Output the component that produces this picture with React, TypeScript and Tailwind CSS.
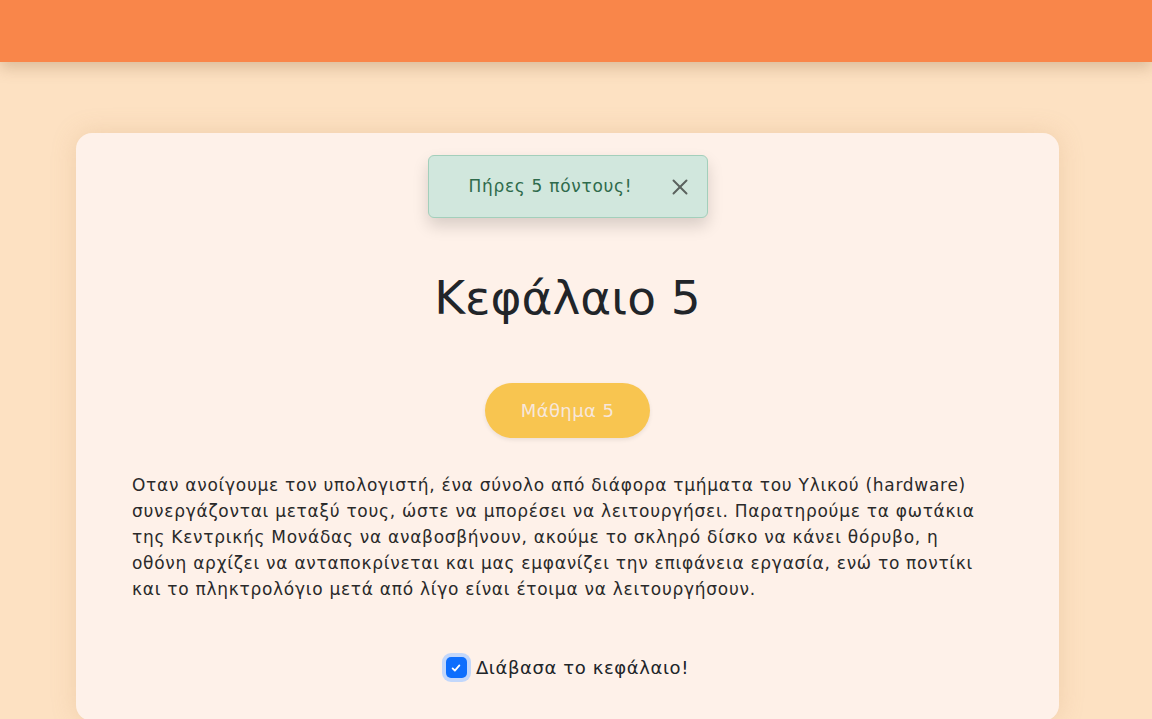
import { X } from "lucide-react";

export default function App() {
  return (
    <div
      className="min-h-screen bg-[#fde1c2] text-[#212529]"
      style={{ fontFamily: '"DejaVu Sans", sans-serif' }}
    >
      {/* Top bar */}
      <header className="relative z-10 h-[62px] bg-[#f9864a] shadow-[0_6px_14px_rgba(120,80,40,0.25)]" />

      <main className="flex pl-[76px] pr-[93px] pt-[71px]">
        <div className="flex-1 rounded-2xl bg-[#fef1e9] px-14 pt-[22px] pb-10 shadow-[0_0_24px_rgba(200,150,100,0.25)]">
          <div className="flex justify-center">
            <div className="flex h-[63px] w-[280px] items-center justify-between rounded-md border border-[#a3cfbb] bg-[#d1e7dd] pl-[40px] pr-[14px] text-[#2f6b4c] shadow-[0_8px_16px_rgba(0,0,0,0.15)]">
              <span className="text-[17px] tracking-[0.7px]">Πήρες 5 πόντους!</span>
              <X size={26} strokeWidth={1.8} className="text-[#5b625e]" />
            </div>
          </div>

          <h1 className="mt-[56px] text-center text-[47px] leading-none">
            Κεφάλαιο 5
          </h1>

          <div className="mt-[62px] flex justify-center">
            <button className="h-[55px] w-[165px] rounded-full bg-[#f8c550] text-[18px] tracking-[0.4px] text-[#f7e7dc] shadow-[0_2px_4px_rgba(0,0,0,0.08)]">
              Μάθημα 5
            </button>
          </div>

          <p className="mt-[34px] text-[17px] leading-[26px] tracking-[0.72px] text-[#2a2a2a]">
            Οταν ανοίγουμε τον υπολογιστή, ένα σύνολο από διάφορα τμήματα του
            Υλικού (hardware) συνεργάζονται μεταξύ τους, ώστε να μπορέσει να
            λειτουργήσει. Παρατηρούμε τα φωτάκια της Κεντρικής Μονάδας να
            αναβοσβήνουν, ακούμε το σκληρό δίσκο να κάνει θόρυβο, η
            <br />
            οθόνη αρχίζει να ανταποκρίνεται και μας εμφανίζει την επιφάνεια
            εργασία, ενώ το ποντίκι
            <br />
            και το πληκτρολόγιο μετά από λίγο είναι έτοιμα να λειτουργήσουν.
          </p>

          <label className="mt-[52px] flex items-center justify-center gap-[9px] text-[18px] tracking-[0.6px]">
            <span className="flex h-[21px] w-[21px] items-center justify-center rounded-[5px] bg-[#0d6efd] ring-4 ring-[#c2d7fb]">
              <svg viewBox="0 0 16 16" className="h-[12px] w-[12px]" fill="none">
                <path
                  d="M3.5 8.5l3 3 6-7"
                  stroke="white"
                  strokeWidth="2.4"
                  strokeLinecap="round"
                  strokeLinejoin="round"
                />
              </svg>
            </span>
            Διάβασα το κεφάλαιο!
          </label>
        </div>
      </main>
    </div>
  );
}
